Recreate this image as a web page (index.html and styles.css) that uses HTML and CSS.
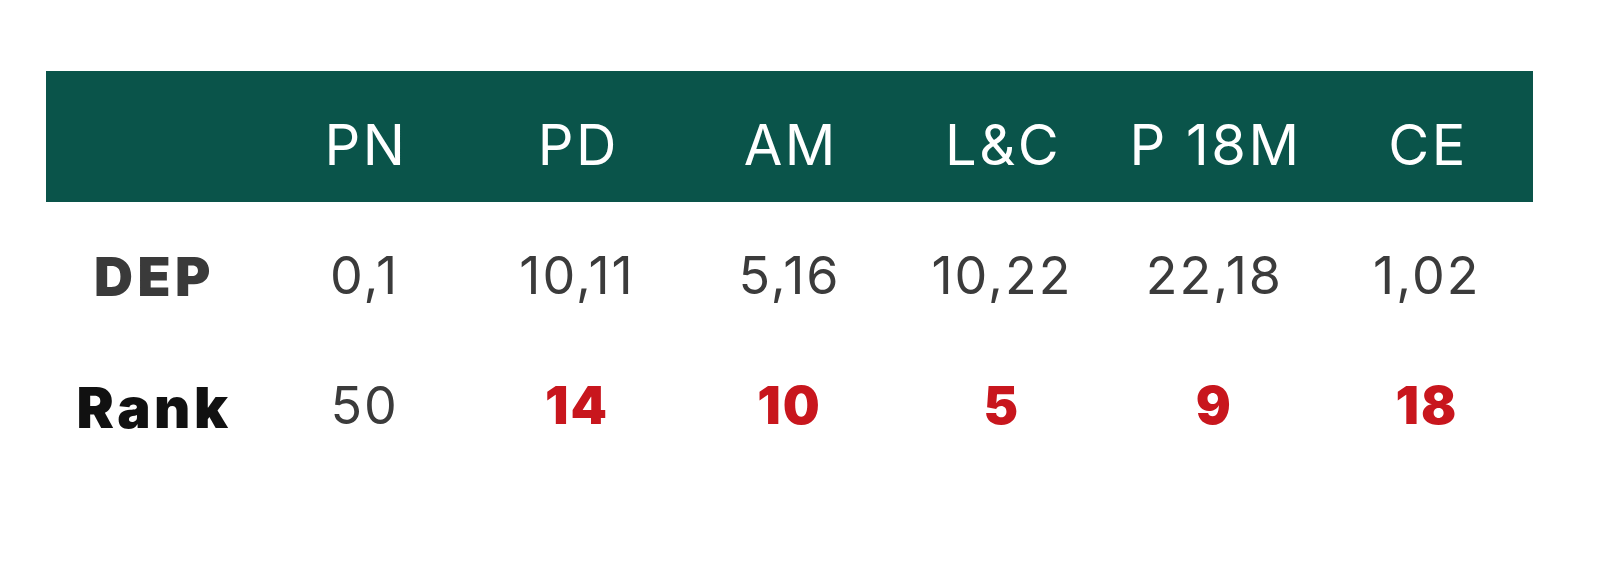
FILE: index.html
```html
<!DOCTYPE html>
<html>
<head>
<meta charset="utf-8">
<link rel="stylesheet" href="styles.css">
</head>
<body>
<div class="page">
  <div class="table">
    <div class="row head">
      <div class="cell"></div>
      <div class="cell">PN</div>
      <div class="cell">PD</div>
      <div class="cell">AM</div>
      <div class="cell">L&amp;C</div>
      <div class="cell">P 18M</div>
      <div class="cell">CE</div>
    </div>
    <div class="row dep">
      <div class="cell label grey">DEP</div>
      <div class="cell">0,1</div>
      <div class="cell">10,11</div>
      <div class="cell">5,16</div>
      <div class="cell">10,22</div>
      <div class="cell">22,18</div>
      <div class="cell">1,02</div>
    </div>
    <div class="row rank">
      <div class="cell label black">Rank</div>
      <div class="cell">50</div>
      <div class="cell red">14</div>
      <div class="cell red">10</div>
      <div class="cell red">5</div>
      <div class="cell red">9</div>
      <div class="cell red">18</div>
    </div>
  </div>
</div>
</body>
</html>
```

FILE: styles.css
```css
html, body {
  margin: 0;
  padding: 0;
  background: #ffffff;
}

.page {
  width: 1600px;
  height: 573px;
  padding: 71px 0 0 46px;
  box-sizing: border-box;
  font-family: "Inter", "DejaVu Sans", sans-serif;
}

.table {
  width: 1487px;
  display: flex;
  flex-direction: column;
}

.row {
  display: grid;
  grid-template-columns: repeat(7, 1fr);
  box-sizing: border-box;
}

.cell {
  text-align: center;
  line-height: 1;
  white-space: nowrap;
}

.head {
  background: #0a544a;
  color: #ffffff;
  height: 131px;
  padding-top: 46px;
  font-size: 56px;
  font-weight: 400;
  letter-spacing: 2.5px;
}

.head .cell {
  text-indent: 2.5px;
}

.dep {
  height: 130px;
  padding-top: 48px;
  font-size: 52px;
  color: #3b3b3b;
  letter-spacing: 2px;
}

.rank {
  height: 130px;
  padding-top: 48px;
  font-size: 52px;
  color: #3b3b3b;
  letter-spacing: 2px;
}

.label {
  font-weight: 900;
}

.grey {
  color: #3a3a3a;
  font-size: 54px;
  letter-spacing: 4.5px;
  text-indent: 4.5px;
}

.black {
  color: #111111;
  font-size: 56px;
  letter-spacing: 3.5px;
  text-indent: 3.5px;
}

.red {
  color: #c8161d;
  font-weight: 900;
}
```
